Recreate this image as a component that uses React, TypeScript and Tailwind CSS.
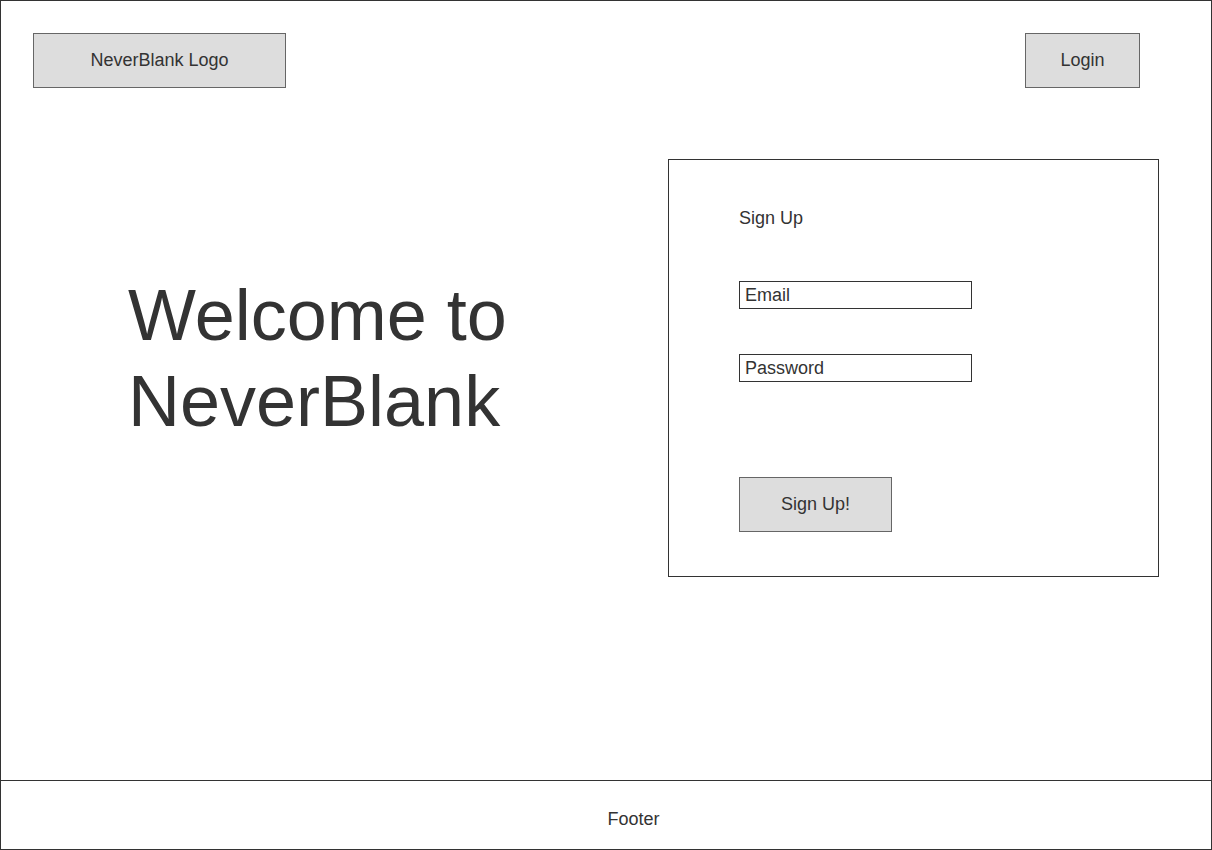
export default function App() {
  return (
    <div className="w-[1212px] h-[850px] border border-[#333] flex flex-col bg-white text-[#333] font-['Liberation_Sans',Arial,sans-serif]">
      <header className="flex justify-between pt-[32px] pl-[32px] pr-[71px]">
        <button className="w-[253px] h-[55px] bg-[#ddd] border border-[#666] text-[18px]">NeverBlank Logo</button>
        <button className="w-[115px] h-[55px] bg-[#ddd] border border-[#666] text-[18px]">Login</button>
      </header>

      <main className="flex-1 flex pt-[71px] pr-[52px]">
        <div className="flex-1 pl-[127px] pt-[113px]">
          <h1 className="text-[72px] leading-[86px]">
            Welcome to
            <br />
            NeverBlank
          </h1>
        </div>

        <div className="w-[491px] h-[418px] border border-[#333] pl-[70px] pt-[48px] flex flex-col">
          <div className="text-[18px] leading-[21px]">Sign Up</div>
          <div className="mt-[52px] w-[233px] h-[28px] border border-[#333] pl-[5px] flex items-center text-[18px]">Email</div>
          <div className="mt-[45px] w-[233px] h-[28px] border border-[#333] pl-[5px] flex items-center text-[18px]">Password</div>
          <button className="mt-[95px] w-[153px] h-[55px] bg-[#ddd] border border-[#666] text-[18px]">Sign Up!</button>
        </div>
      </main>

      <footer className="h-[69px] border-t border-[#333] flex items-center justify-center pl-[55px] pt-[8px] text-[18px]">
        Footer
      </footer>
    </div>
  )
}
